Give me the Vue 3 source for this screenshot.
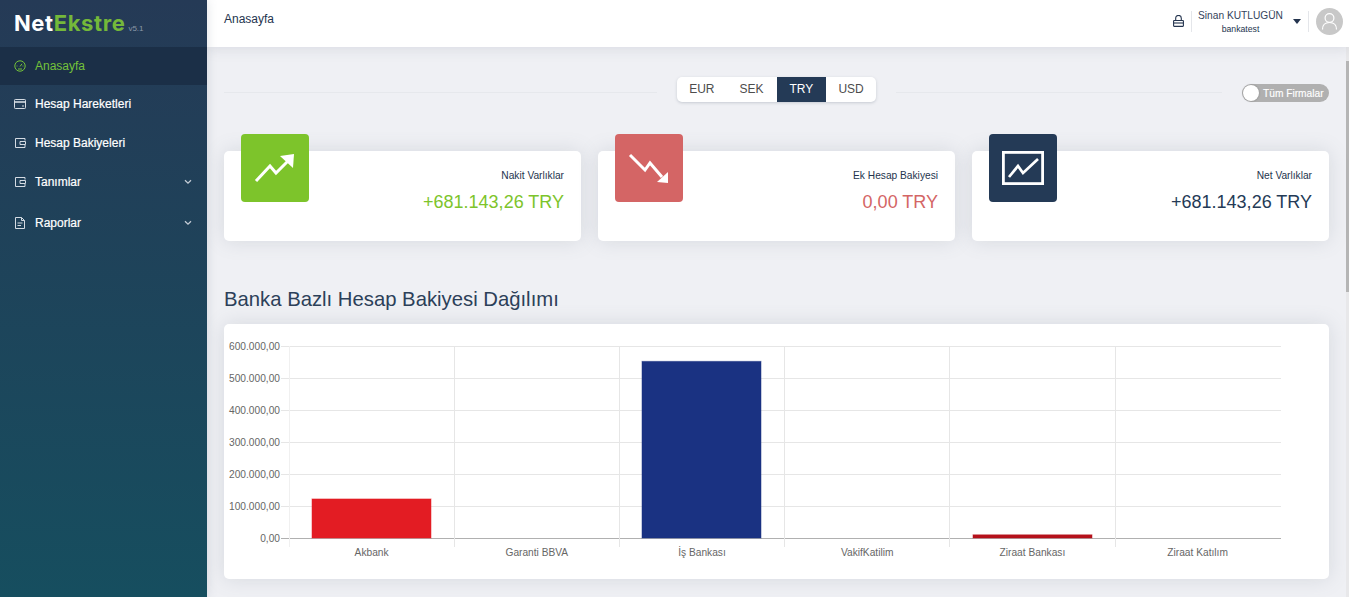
<script setup>
const menu = [
  { label: "Anasayfa", icon: "gauge", active: true, h: 38 },
  { label: "Hesap Hareketleri", icon: "card", h: 38 },
  { label: "Hesap Bakiyeleri", icon: "wallet", h: 39 },
  { label: "Tanımlar", icon: "wallet", arrow: true, h: 39 },
  { label: "Raporlar", icon: "doc", arrow: true, h: 43 },
];

const currencies = ["EUR", "SEK", "TRY", "USD"];

const cards = [
  { title: "Nakit Varlıklar", value: "+681.143,26 TRY", kind: "up" },
  { title: "Ek Hesap Bakiyesi", value: "0,00 TRY", kind: "down" },
  { title: "Net Varlıklar", value: "+681.143,26 TRY", kind: "net" },
];

const ticks = ["600.000,00", "500.000,00", "400.000,00", "300.000,00", "200.000,00", "100.000,00", "0,00"];

const banks = [
  { name: "Akbank", value: 122000, color: "#e31c23" },
  { name: "Garanti BBVA", value: 0, color: "#333" },
  { name: "İş Bankası", value: 552000, color: "#1a3282" },
  { name: "VakifKatilim", value: 0, color: "#333" },
  { name: "Ziraat Bankası", value: 10000, color: "#b5121b" },
  { name: "Ziraat Katılım", value: 0, color: "#333" },
];

const plotLeft = 65;
const plotTop = 22;
const plotRight = 1057;
const stepY = 32;
const stepX = 165.2;
const barWidth = 119;
const colX = (i) => Math.floor(plotLeft + i * stepX);
const barX = (i) => Math.floor(plotLeft + i * 165.33 + 23);
const barHeight = (v) => (v / 600000) * 192;
</script>

<template>
  <div class="page">
    <aside class="sidebar">
      <div class="logo">
        <span class="logo-net">Net</span><span class="logo-ekstre">Ekstre</span><span class="logo-ver">v5.1</span>
      </div>
      <nav>
        <a
          v-for="item in menu"
          :key="item.label"
          class="menu-item"
          :class="{ active: item.active }"
          :style="{ height: item.h + 'px' }"
        >
          <svg class="menu-icon" viewBox="0 0 12 12" fill="none" stroke="currentColor" stroke-width="1">
            <template v-if="item.icon === 'gauge'">
              <circle cx="6" cy="6" r="5.2" />
              <path d="M6 6.500 8 3.800M2.600 6h.8M8.600 6h.8M4 9h4" />
            </template>
            <template v-else-if="item.icon === 'card'">
              <rect x="0.5" y="1.5" width="11" height="9" rx="0.8" />
              <path d="M0.5 4h11" stroke-width="1.6" />
              <path d="M8 8h2" />
            </template>
            <template v-else-if="item.icon === 'wallet'">
              <path d="M11 1.500H1.500v9H11V8M11 1.500v2" />
              <path d="M6 4.500h5.500v3H6z" />
            </template>
            <template v-else>
              <path d="M1.500 0.500h6l3 3v8h-9zM7.500 0.500v3h3" />
              <path d="M3.500 6h5M3.500 8.500h3.500" />
            </template>
          </svg>
          <span class="menu-label">{{ item.label }}</span>
          <svg v-if="item.arrow" class="menu-arrow" viewBox="0 0 8 6" fill="none" stroke="currentColor" stroke-width="1.3">
            <path d="M1 1.200 4 4.200 7 1.200" />
          </svg>
        </a>
      </nav>
    </aside>

    <div class="main">
      <header class="topbar">
        <div class="crumb">Anasayfa</div>
        <div class="user-area">
          <svg class="lock" viewBox="0 0 11 12" fill="none" stroke="#24344e" stroke-width="1.1">
            <path d="M2.700 5.500V3.200a2.800 2.800 0 0 1 5.600 0v2.300" />
            <rect x="0.600" y="5.500" width="9.800" height="5.900" rx="0.6" />
            <path d="M0.600 8h9.800" />
          </svg>
          <div class="divider"></div>
          <div class="user-text">
            <div class="user-name">Sinan KUTLUGÜN</div>
            <div class="user-firm">bankatest</div>
          </div>
          <div class="caret"></div>
          <div class="divider"></div>
          <div class="avatar">
            <svg viewBox="0 0 27 27" fill="none" stroke="#fff" stroke-width="1.2">
              <circle cx="13.500" cy="10" r="4.400" />
              <path d="M6.500 21.500c0-4.500 2.800-7 7-7s7 2.500 7 7" />
            </svg>
          </div>
        </div>
      </header>

      <div class="body">
        <div class="content">
          <div class="filter-row">
            <div class="rule"></div>
            <div class="tabs">
              <div v-for="c in currencies" :key="c" class="tab" :class="{ selected: c === 'TRY' }">{{ c }}</div>
            </div>
            <div class="filter-right">
              <div class="rule"></div>
              <div class="toggle">
                <span class="knob"></span>
                <span>Tüm Firmalar</span>
              </div>
            </div>
          </div>

          <div class="cards">
            <div v-for="card in cards" :key="card.title" class="card" :class="card.kind">
              <div class="card-icon">
                <svg v-if="card.kind === 'up'" viewBox="0 0 68 68" fill="none" stroke="#fff" stroke-width="3">
                  <path d="M15 47 29 32 35 39 47 27" />
                  <path d="M39 22 53 20 52 34Z" fill="#fff" stroke="none" />
                </svg>
                <svg v-else-if="card.kind === 'down'" viewBox="0 0 68 68" fill="none" stroke="#fff" stroke-width="3">
                  <path d="M15 21 30 36 35 29 47 43" />
                  <path d="M53 38 53 49 42 48Z" fill="#fff" stroke="none" />
                </svg>
                <svg v-else viewBox="0 0 68 68" fill="none" stroke="#fff">
                  <rect x="14.400" y="18.400" width="39.200" height="31.200" stroke-width="2.800" />
                  <path d="M20 43 29 32 34 39 49 25" stroke-width="2.700" />
                </svg>
              </div>
              <div class="card-title">{{ card.title }}</div>
              <div class="card-value">{{ card.value }}</div>
            </div>
          </div>

          <h2 class="section-title">Banka Bazlı Hesap Bakiyesi Dağılımı</h2>

          <div class="panel">
            <svg class="chart" width="1105" height="255" viewBox="0 0 1105 255">
              <g v-for="(t, i) in ticks" :key="t">
                <line :x1="plotLeft - 8" :x2="plotRight" :y1="plotTop + i * stepY + 0.5" :y2="plotTop + i * stepY + 0.5" :stroke="i === 6 ? '#b0b0b0' : '#e6e6e6'" />
                <text :x="plotLeft - 9" :y="plotTop + i * stepY + 4" text-anchor="end" class="tick">{{ t }}</text>
              </g>
              <g v-for="(b, i) in banks" :key="b.name">
                <line :x1="colX(i) + 0.5" :x2="colX(i) + 0.5" :y1="plotTop" :y2="plotTop + 201" :stroke="i === 0 ? '#f0f0f0' : '#e6e6e6'" />
                <rect
                  v-if="b.value"
                  class="bar"
                  :x="barX(i)"
                  :y="plotTop + 192 - barHeight(b.value)"
                  :width="barWidth"
                  :height="barHeight(b.value)"
                  :fill="b.color"
                  :stroke="b.color"
                />
                <text :x="plotLeft + i * stepX + stepX / 2" y="232" text-anchor="middle" class="tick">{{ b.name }}</text>
              </g>
            </svg>
          </div>
        </div>
        <div class="scrollbar"><div class="thumb"></div></div>
      </div>
    </div>
  </div>
</template>

<style>
html,
body {
  margin: 0;
  overflow: hidden;
}
</style>

<style scoped>
.page {
  display: flex;
  width: 1349px;
  height: 597px;
  overflow: hidden;
  font-family: "Liberation Sans", Arial, sans-serif;
  background: #eff0f4;
}
.sidebar {
  width: 207px;
  flex: none;
  background: linear-gradient(180deg, #253a56 0%, #164e5f 100%);
  box-shadow: 0 0 10px rgba(100, 110, 130, 0.2);
  position: relative;
  z-index: 2;
}
.logo {
  height: 47px;
  display: flex;
  align-items: baseline;
  padding-left: 14px;
  box-sizing: border-box;
  padding-top: 9px;
  font-family: Inter, "Liberation Sans", sans-serif;
  font-weight: 700;
  font-size: 22px;
  letter-spacing: 0.6px;
  line-height: 28px;
}
.logo-net {
  color: #fff;
}
.logo-ekstre {
  color: #74b83a;
}
.logo-ver {
  font-size: 8px;
  font-weight: 400;
  letter-spacing: 0;
  color: #8b98a8;
  margin-left: 3px;
  font-family: "Liberation Sans", sans-serif;
}
.menu-item {
  display: flex;
  align-items: center;
  padding-left: 14px;
  padding-right: 15px;
  color: #fff;
  font-size: 12px;
  -webkit-text-stroke: 0.2px #fff;
}
.menu-item.active {
  background: #1b2f47;
  color: #74c23a;
  -webkit-text-stroke: 0;
}
.menu-icon {
  width: 12px;
  height: 12px;
  margin-right: 9px;
  color: #d4dbe3;
}
.active .menu-icon {
  color: #74c23a;
}
.menu-label {
  flex: 1;
}
.menu-arrow {
  width: 8px;
  height: 6px;
  color: #c4ccd6;
}
.main {
  flex: 1;
  min-width: 0;
  display: flex;
  flex-direction: column;
}
.topbar {
  height: 47px;
  flex: none;
  display: flex;
  justify-content: space-between;
  background: #fff;
  padding: 0 6px 0 17px;
  box-shadow: 0 2px 12px rgba(120, 130, 150, 0.18);
  position: relative;
}
.crumb {
  font-size: 12px;
  color: #24344e;
  padding-top: 12px;
}
.user-area {
  display: flex;
  align-items: center;
  height: 43px;
}
.lock {
  width: 11px;
  height: 12px;
  margin: 0 7px 1px 0;
}
.divider {
  width: 1px;
  height: 21px;
  margin-bottom: 1px;
  background: #e4e6ea;
}
.user-text {
  width: 100px;
  box-sizing: border-box;
  align-self: flex-start;
  padding: 9px 3px 0 0;
  text-align: center;
  color: #34435c;
}
.user-name {
  font-size: 10.2px;
  line-height: 13px;
}
.user-firm {
  font-size: 8.700px;
  line-height: 12px;
  margin-top: 1px;
  color: #24344e;
}
.caret {
  width: 0;
  height: 0;
  border-left: 4px solid transparent;
  border-right: 4px solid transparent;
  border-top: 5px solid #24344e;
  margin: 0 7px 0 1px;
}
.avatar {
  width: 27px;
  height: 27px;
  border-radius: 50%;
  background: #c8c8c8;
  margin-left: 7px;
}
.avatar svg {
  display: block;
  width: 27px;
  height: 27px;
}
.body {
  flex: 1;
  min-height: 0;
  display: flex;
  overflow: hidden;
}
.content {
  flex: 1;
  min-width: 0;
  padding: 30px 17px 0 17px;
}
.scrollbar {
  width: 3px;
  flex: none;
  background: #e8e8ea;
}
.thumb {
  height: 231px;
  margin-top: 14px;
  background: #b5b5b5;
}
.filter-row {
  display: grid;
  grid-template-columns: 1fr 199px 1fr;
  column-gap: 20px;
  align-items: start;
  height: 25px;
}
.filter-right {
  display: flex;
  align-items: flex-start;
}
.rule {
  flex: 1;
  height: 1px;
  background: #e6e8ec;
  margin-top: 15px;
}
.tabs {
  display: flex;
  background: #fff;
  border-radius: 5px;
  overflow: hidden;
  box-shadow: 0 1px 3px rgba(80, 90, 110, 0.25);
}
.tab {
  flex: 1;
  height: 25px;
  line-height: 25px;
  text-align: center;
  font-size: 12px;
  color: #4d4d4d;
}
.tab.selected {
  background: #243a56;
  color: #fff;
}
.toggle {
  width: 87px;
  height: 18px;
  margin-left: 20px;
  margin-top: 7px;
  display: flex;
  align-items: center;
  background: #b0b0b0;
  border-radius: 9px;
  color: #fff;
  font-size: 10.200px;
  -webkit-text-stroke: 0.15px #fff;
}
.knob {
  width: 16px;
  height: 16px;
  margin: 0 4px 0 1px;
  border-radius: 50%;
  background: #fff;
  box-shadow: 0 0 2px rgba(0, 0, 0, 0.3);
}
.cards {
  display: grid;
  grid-template-columns: repeat(3, 357px);
  gap: 17px;
  margin-top: 49px;
}
.card {
  position: relative;
  height: 90px;
  box-sizing: border-box;
  padding: 19px 17px 0;
  background: #fff;
  border-radius: 5px;
  box-shadow: 0 0 20px rgba(100, 110, 130, 0.18);
  text-align: right;
}
.card-icon {
  position: absolute;
  left: 17px;
  top: -17px;
  width: 68px;
  height: 68px;
  border-radius: 4px;
}
.card-icon svg {
  display: block;
  width: 68px;
  height: 68px;
}
.up .card-icon {
  background: #7dc42b;
}
.down .card-icon {
  background: #d46565;
}
.net .card-icon {
  background: #243a56;
}
.card-title {
  font-size: 10.200px;
  line-height: 12px;
  color: #24344e;
}
.card-value {
  margin-top: 8px;
  font-size: 18px;
  line-height: 24px;
  color: #243a56;
}
.up .card-value {
  color: #7dc42b;
}
.down .card-value {
  color: #d46565;
}
.section-title {
  margin: 45px 0 12px;
  font-size: 20.300px;
  line-height: 26px;
  font-weight: 400;
  color: #2c4059;
}
.panel {
  height: 255px;
  background: #fff;
  border-radius: 5px;
  box-shadow: 0 0 20px rgba(100, 110, 130, 0.18);
}
.chart {
  display: block;
}
.bar {
  stroke-opacity: 0.5;
}
.tick {
  font-size: 10.200px;
  fill: #666;
  font-family: "Liberation Sans", Arial, sans-serif;
}
</style>
